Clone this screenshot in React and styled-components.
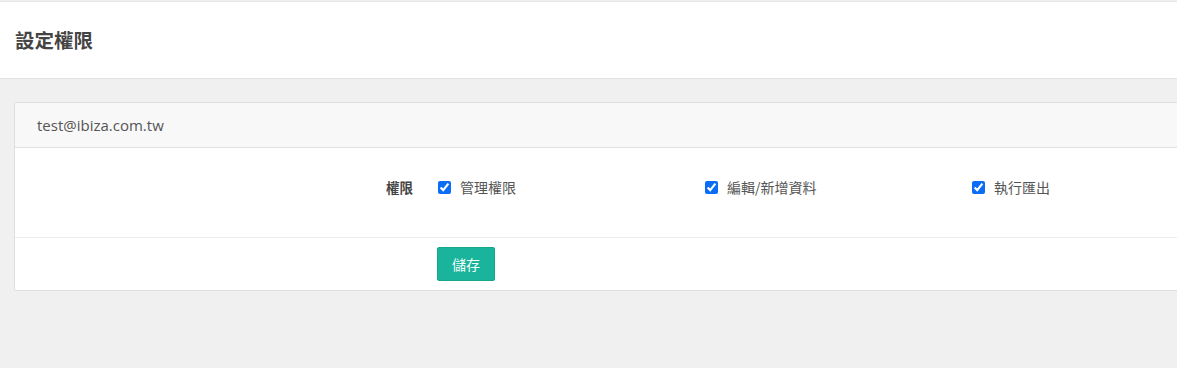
import React, { useState } from 'react';
import styled, { createGlobalStyle } from 'styled-components';

const GlobalStyle = createGlobalStyle`
  html, body {
    margin: 0;
    padding: 0;
    background: #f0f0f0;
    overflow: hidden;
  }
  body {
    font-family: "Open Sans", "Noto Sans CJK TC", sans-serif;
    font-size: 14px;
    color: #555;
  }
`;

const Page = styled.div`
  min-height: 368px;
  background: #f0f0f0;
  overflow: hidden;
`;

const TopRule = styled.div`
  height: 1px;
  margin-top: 1px;
  background: #e6e6e6;
`;

const PageHeading = styled.div`
  background: #fff;
  height: 76px;
  border-bottom: 1px solid #e4e4e4;
  display: flex;
  align-items: center;
  padding: 0 15px;
`;

const Title = styled.h2`
  margin: 0;
  font-family: "Noto Sans CJK TC", sans-serif;
  font-size: 19.5px;
  font-weight: 600;
  color: #444;
  line-height: 1;
`;

const Wrapper = styled.div`
  padding: 23px 0 0 14px;
  overflow: hidden;
`;

const Card = styled.div`
  width: calc(100% + 40px);
  background: #fff;
  border: 1px solid #dedede;
  border-radius: 2px;
`;

const CardHeader = styled.div`
  background: #f8f8f8;
  height: 44px;
  border-bottom: 1px solid #e0e0e0;
  display: flex;
  align-items: center;
  padding: 0 22px;
  font-size: 15px;
  color: #555;
`;

const FormRow = styled.div`
  display: grid;
  grid-template-columns: 408px 1fr;
  align-items: center;
  padding: ${(p) => p.$pad};
  border-bottom: ${(p) => (p.$divider ? '1px solid #ececec' : 'none')};
`;

const Label = styled.label`
  text-align: right;
  padding-right: 10px;
  font-family: "Noto Sans CJK TC", sans-serif;
  font-weight: 600;
  font-size: 13.5px;
  color: #444;
  line-height: 20px;
`;

const Options = styled.div`
  display: grid;
  grid-template-columns: repeat(3, 267px);
  padding-left: 15px;
`;

const Option = styled.label`
  display: flex;
  align-items: center;
  gap: 9px;
  font-family: "Noto Sans CJK TC", sans-serif;
  font-size: 14px;
  color: #555;
  line-height: 20px;
  cursor: pointer;
`;

const Check = styled.input`
  margin: 0;
  width: 13px;
  height: 13px;
  accent-color: #0b6cf6;
`;

const Controls = styled.div`
  padding-left: 14px;
`;

const SaveButton = styled.button`
  height: 34px;
  padding: 0 14px;
  border: 1px solid #18a689;
  border-radius: 2px;
  background: #1ab39c;
  color: #f4fffc;
  font-family: "Noto Sans CJK TC", sans-serif;
  font-size: 14px;
  line-height: 20px;
  cursor: pointer;
`;

const permissions = ['管理權限', '編輯/新增資料', '執行匯出'];

export default function App() {
  const [checked, setChecked] = useState(permissions.map(() => true));

  const toggle = (i) =>
    setChecked((c) => c.map((v, j) => (j === i ? !v : v)));

  return (
    <Page>
      <GlobalStyle />
      <TopRule />
      <PageHeading>
        <Title>設定權限</Title>
      </PageHeading>
      <Wrapper>
        <Card>
          <CardHeader>test@ibiza.com.tw</CardHeader>
          <FormRow $pad="29px 0 40px" $divider>
            <Label>權限</Label>
            <Options>
              {permissions.map((p, i) => (
                <Option key={p}>
                  <Check type="checkbox" checked={checked[i]} onChange={() => toggle(i)} />
                  {p}
                </Option>
              ))}
            </Options>
          </FormRow>
          <FormRow $pad="9px 0 9px">
            <div />
            <Controls>
              <SaveButton>儲存</SaveButton>
            </Controls>
          </FormRow>
        </Card>
      </Wrapper>
    </Page>
  );
}
